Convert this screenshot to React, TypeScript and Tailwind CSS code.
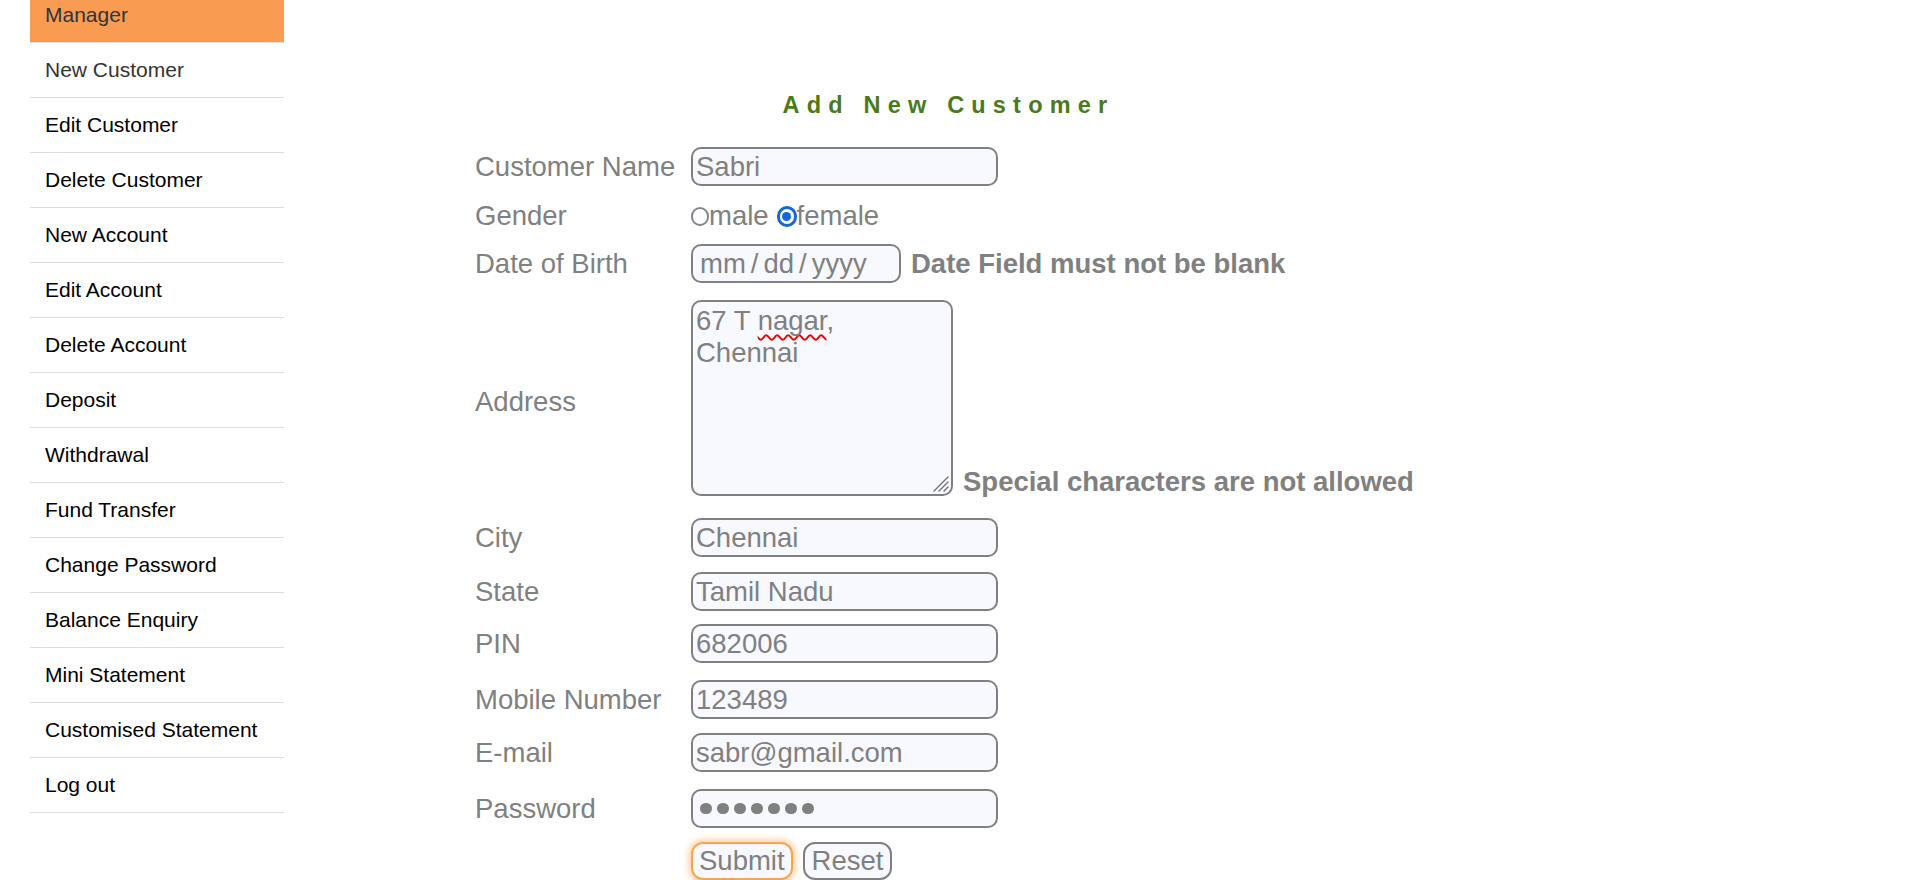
import React from "react";

const menuItems = [
  "New Customer",
  "Edit Customer",
  "Delete Customer",
  "New Account",
  "Edit Account",
  "Delete Account",
  "Deposit",
  "Withdrawal",
  "Fund Transfer",
  "Change Password",
  "Balance Enquiry",
  "Mini Statement",
  "Customised Statement",
  "Log out",
];

// shared look of the form fields (width set per field)
const box =
  "h-[39px] rounded-[10px] border-2 border-[#808080] bg-[#f8f8ff] text-[27.5px] text-[#808080]";

function Row({
  label,
  className,
  labelClass = "",
  children,
}: {
  label: string;
  className: string;
  labelClass?: string;
  children: React.ReactNode;
}) {
  return (
    <div className={`flex items-center ${className}`}>
      <div
        className={`w-[216px] shrink-0 text-[27.5px] leading-[32px] text-[#808080] ${labelClass}`}
      >
        {label}
      </div>
      {children}
    </div>
  );
}

function TextField({ value }: { value: string }) {
  return (
    <input
      readOnly
      value={value}
      className={`${box} w-[307px] px-[3px] outline-none`}
    />
  );
}

export default function App() {
  return (
    <div className="flex h-[880px] w-full overflow-hidden bg-white font-['Liberation_Sans',Arial,sans-serif]">
      {/* Side menu */}
      <ul className="ml-[30px] -mt-[12px] w-[254px] shrink-0 text-[21px]">
        <li className="flex h-[55px] items-center border-b border-[#dddddd] bg-[#f99c51] pl-[15px] text-[#333333]">
          Manager
        </li>
        {menuItems.map((item, i) => (
          <li
            key={item}
            className={`flex h-[55px] items-center border-b border-[#dddddd] pl-[15px] ${
              i === 0 ? "text-[#333333]" : "text-black"
            }`}
          >
            {item}
          </li>
        ))}
      </ul>

      {/* Form */}
      <div className="ml-[191px] w-fit shrink-0 pt-[92px]">
        <h2 className="h-[26px] pl-[8px] text-center text-[23.5px] font-bold leading-[27px] tracking-[7.2px] text-[#4a7a1a]">
          Add New Customer
        </h2>

        <Row label="Customer Name" className="mt-[29px] h-[39px]">
          <TextField value="Sabri" />
        </Row>

        <Row label="Gender" className="mt-[11px] h-[38px]">
          <div className="flex items-center text-[27.5px] leading-[32px] text-[#808080]">
            <span className="h-[19px] w-[18px] shrink-0 rounded-full border-2 border-[#858590] bg-white" />
            <span>male</span>
            <span className="ml-[8px] flex h-[21px] w-[20px] shrink-0 items-center justify-center rounded-full border-[3px] border-[#1565db] bg-white">
              <span className="h-[9px] w-[9px] rounded-full bg-[#1565db]" />
            </span>
            <span>female</span>
          </div>
        </Row>

        <Row label="Date of Birth" className="mt-[9px] h-[39px]">
          <div className={`${box} flex w-[210px] items-center pl-[7px]`}>
            mm<span className="mx-[5px]">/</span>dd
            <span className="mx-[5px]">/</span>yyyy
          </div>
          <span className="ml-[10px] text-[27.5px] font-bold leading-[32px] text-[#808080]">
            Date Field must not be blank
          </span>
        </Row>

        <Row label="Address" className="mt-[17px] h-[196px]" labelClass="mt-[8px]">
          <div className="relative h-[196px] w-[262px] rounded-[10px] border-2 border-[#808080] bg-[#f8f8ff] px-[3px] pt-[3px] text-[27.5px] leading-[32px] text-[#808080]">
            67 T{" "}
            <span className="underline decoration-[#ee0000] decoration-wavy decoration-[1.5px] underline-offset-[4px] [text-decoration-skip-ink:none]">
              nagar
            </span>
            ,
            <br />
            Chennai
            <svg
              className="absolute bottom-[1px] right-[1px]"
              width="20"
              height="20"
              viewBox="0 0 20 20"
            >
              <g stroke="#6f6f6f" strokeWidth="1.3" strokeLinecap="round">
                <line x1="18" y1="4" x2="4" y2="18" />
                <line x1="18" y1="9" x2="9" y2="18" />
                <line x1="18" y1="14" x2="14" y2="18" />
              </g>
            </svg>
          </div>
          <span className="ml-[10px] self-end text-[27.5px] font-bold leading-[28px] text-[#808080]">
            Special characters are not allowed
          </span>
        </Row>

        <Row label="City" className="mt-[22px] h-[39px]">
          <TextField value="Chennai" />
        </Row>
        <Row label="State" className="mt-[15px] h-[39px]">
          <TextField value="Tamil Nadu" />
        </Row>
        <Row label="PIN" className="mt-[13px] h-[39px]">
          <TextField value="682006" />
        </Row>
        <Row label="Mobile Number" className="mt-[17px] h-[39px]">
          <TextField value="123489" />
        </Row>
        <Row label="E-mail" className="mt-[14px] h-[39px]">
          <TextField value="sabr@gmail.com" />
        </Row>
        <Row label="Password" className="mt-[17px] h-[39px]">
          <div className={`${box} flex w-[307px] items-center gap-[5.5px] pl-[7px]`}>
            {Array.from({ length: 7 }).map((_, i) => (
              <span
                key={i}
                className="h-[11.5px] w-[11.5px] rounded-full bg-[#808080]"
              />
            ))}
          </div>
        </Row>

        <div className="mt-[14px] flex h-[38px] pl-[216px]">
          <button className="h-[38px] rounded-[12px] border-2 border-[#fba54f] bg-[#f8f8ff] px-[6px] text-[27.5px] leading-none text-[#808080] shadow-[0_0_7px_2px_rgba(255,160,70,0.55)]">
            Submit
          </button>
          <button className="ml-[10px] h-[38px] rounded-[12px] border-2 border-[#808080] bg-[#f8f8ff] px-[7px] text-[27.5px] leading-none text-[#808080]">
            Reset
          </button>
        </div>
      </div>
    </div>
  );
}
